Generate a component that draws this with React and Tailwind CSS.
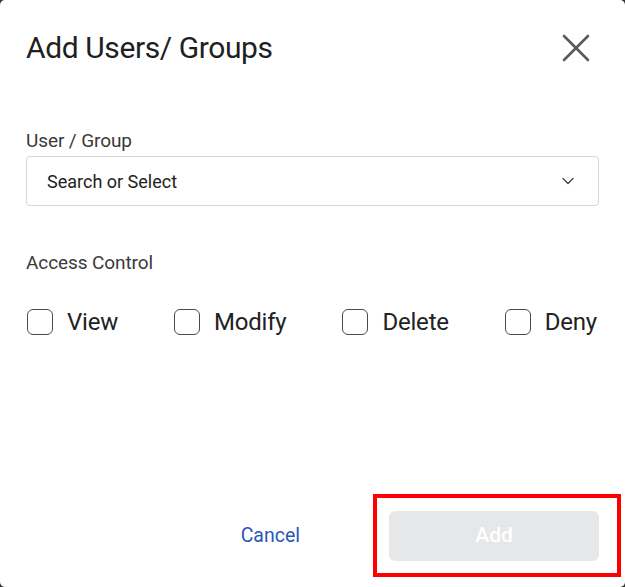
import { X, ChevronDown } from "lucide-react";

function Check({ label }) {
  return (
    <label className="flex items-center gap-[14px]">
      <span className="w-[26px] h-[26px] rounded-[6px] border-[1.5px] border-[#4a4a4a] bg-white" />
      <span className="text-[24px] leading-[28px] text-[#222] tracking-[-0.2px]">{label}</span>
    </label>
  );
}

export default function App() {
  return (
    <div className="w-[625px] h-[587px] bg-[#333]" style={{ fontFamily: "Roboto, 'Liberation Sans', sans-serif" }}>
      <div className="w-full h-full bg-white rounded-[5px] flex flex-col px-[26px]">
        {/* header */}
        <div className="flex items-center justify-between pt-[30px] h-[66px]">
          <h1 className="text-[30px] leading-[34px] text-[#1f1f1f] tracking-[-0.4px]">Add Users/ Groups</h1>
          <X className="w-[48px] h-[48px] -my-[7px] -mr-[1px] text-[#5a5a5a]" strokeWidth={1.3} />
        </div>

        {/* user / group */}
        <div className="mt-[63px] text-[19px] leading-[24px] text-[#3a3a3a] tracking-[-0.1px]">User / Group</div>
        <div className="mt-[3px] h-[50px] border border-[#d6d6d6] rounded-[4px] flex items-center justify-between pl-[20px] pr-[20px]">
          <span className="text-[18px] text-[#222]">Search or Select</span>
          <ChevronDown className="w-[20px] h-[20px] text-[#444]" strokeWidth={1.6} />
        </div>

        {/* access control */}
        <div className="mt-[45px] text-[19px] leading-[24px] text-[#3a3a3a] tracking-[-0.1px]">Access Control</div>
        <div className="mt-[33px] flex items-center justify-between pl-[1px] pr-[2px]">
          <Check label="View" />
          <Check label="Modify" />
          <Check label="Delete" />
          <Check label="Deny" />
        </div>

        {/* footer */}
        <div className="mt-auto mb-[10px] flex items-center justify-end -mr-[22px]">
          <button className="text-[19.5px] text-[#2a56b8] mr-[73px]">Cancel</button>
          <div className="border-[4px] border-[#ff0000] pl-[12px] pr-[18px] pt-[13px] pb-[12px]">
            <button className="w-[210px] h-[50px] rounded-[6px] bg-[#e6e7e9] text-white text-[21px] font-medium">
              Add
            </button>
          </div>
        </div>
      </div>
    </div>
  );
}
